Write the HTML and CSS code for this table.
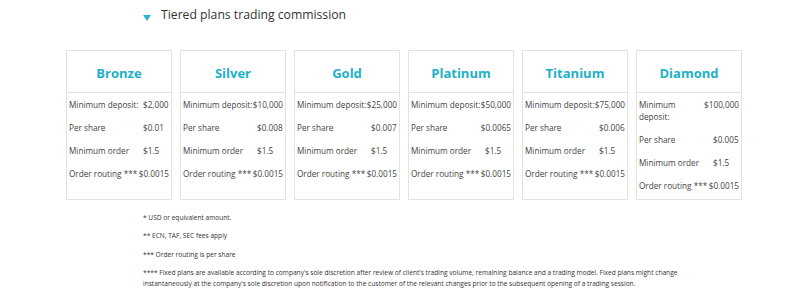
FILE: index.html
```html
<!DOCTYPE html>
<html>
<head>
<meta charset="utf-8">
<link rel="stylesheet" href="styles.css">
</head>
<body>
<div class="page">
  <h2 class="section-title"><span class="caret"></span>Tiered plans trading commission</h2>
  <div class="plans">
    <div class="plan">
      <div class="plan-head">Bronze</div>
      <div class="row"><span class="label">Minimum deposit:</span><span class="value">$2,000</span></div>
      <div class="row"><span class="label">Per share</span><span class="value">$0.01</span></div>
      <div class="row"><span class="label">Minimum order</span><span class="value">$1.5</span></div>
      <div class="row"><span class="label">Order routing ***</span><span class="value">$0.0015</span></div>
    </div>
    <div class="plan">
      <div class="plan-head">Silver</div>
      <div class="row"><span class="label">Minimum deposit:</span><span class="value">$10,000</span></div>
      <div class="row"><span class="label">Per share</span><span class="value">$0.008</span></div>
      <div class="row"><span class="label">Minimum order</span><span class="value">$1.5</span></div>
      <div class="row"><span class="label">Order routing ***</span><span class="value">$0.0015</span></div>
    </div>
    <div class="plan">
      <div class="plan-head">Gold</div>
      <div class="row"><span class="label">Minimum deposit:</span><span class="value">$25,000</span></div>
      <div class="row"><span class="label">Per share</span><span class="value">$0.007</span></div>
      <div class="row"><span class="label">Minimum order</span><span class="value">$1.5</span></div>
      <div class="row"><span class="label">Order routing ***</span><span class="value">$0.0015</span></div>
    </div>
    <div class="plan">
      <div class="plan-head">Platinum</div>
      <div class="row"><span class="label">Minimum deposit:</span><span class="value">$50,000</span></div>
      <div class="row"><span class="label">Per share</span><span class="value">$0.0065</span></div>
      <div class="row"><span class="label">Minimum order</span><span class="value">$1.5</span></div>
      <div class="row"><span class="label">Order routing ***</span><span class="value">$0.0015</span></div>
    </div>
    <div class="plan">
      <div class="plan-head">Titanium</div>
      <div class="row"><span class="label">Minimum deposit:</span><span class="value">$75,000</span></div>
      <div class="row"><span class="label">Per share</span><span class="value">$0.006</span></div>
      <div class="row"><span class="label">Minimum order</span><span class="value">$1.5</span></div>
      <div class="row"><span class="label">Order routing ***</span><span class="value">$0.0015</span></div>
    </div>
    <div class="plan">
      <div class="plan-head">Diamond</div>
      <div class="row"><span class="label">Minimum deposit:</span><span class="value">$100,000</span></div>
      <div class="row"><span class="label">Per share</span><span class="value">$0.005</span></div>
      <div class="row"><span class="label">Minimum order</span><span class="value">$1.5</span></div>
      <div class="row"><span class="label">Order routing ***</span><span class="value">$0.0015</span></div>
    </div>
  </div>
  <div class="notes">
    <p>* USD or equivalent amount.</p>
    <p>** ECN, TAF, SEC fees apply</p>
    <p>*** Order routing is per share</p>
    <p>**** Fixed plans are available according to company's sole discretion after review of client's trading volume, remaining balance and a trading model. Fixed plans might change instantaneously at the company's sole discretion upon notification to the customer of the relevant changes prior to the subsequent opening of a trading session.</p>
  </div>
</div>
</body>
</html>
```

FILE: styles.css
```css
html, body {
  margin: 0;
  padding: 0;
  background: #ffffff;
}

body {
  font-family: "Open Sans", "Noto Sans", sans-serif;
  color: #333333;
}

.page {
  width: 800px;
}

.section-title {
  margin: 0;
  padding: 6px 0 0 143px;
  height: 50px;
  box-sizing: border-box;
  font-size: 12.2px;
  font-weight: 400;
  line-height: 18px;
  color: #333333;
  display: flex;
  align-items: flex-start;
}

.caret {
  width: 0;
  height: 0;
  border-left: 4px solid transparent;
  border-right: 4px solid transparent;
  border-top: 6px solid #2ab4cb;
  margin: 9px 10px 0 0;
}

.plans {
  margin-left: 66px;
  width: 676px;
  display: grid;
  grid-template-columns: repeat(6, 1fr);
  column-gap: 8px;
}

.plan {
  border: 1px solid #e3e3e3;
  padding: 0 2px 2px 2px;
  min-height: 150px;
  box-sizing: border-box;
}

.plan-head {
  height: 42px;
  margin: 0 -2px;
  padding-top: 2px;
  border-bottom: 1px solid #e3e3e3;
  box-sizing: border-box;
  display: flex;
  align-items: center;
  justify-content: center;
  font-size: 13px;
  font-weight: 700;
  color: #20b1c7;
}

.row {
  display: flex;
  justify-content: space-between;
  align-items: flex-start;
  padding: 5.5px 0;
  font-size: 8.2px;
  line-height: 12px;
  color: #444444;
}

.label {
  min-width: 0;
}

.value {
  flex: none;
  min-width: 26px;
  text-align: left;
}

.notes {
  margin-left: 143px;
  width: 556px;
  padding-top: 4px;
  font-size: 6.6px;
  line-height: 11px;
  color: #333333;
}

.notes p {
  margin: 7.5px 0;
}
```
